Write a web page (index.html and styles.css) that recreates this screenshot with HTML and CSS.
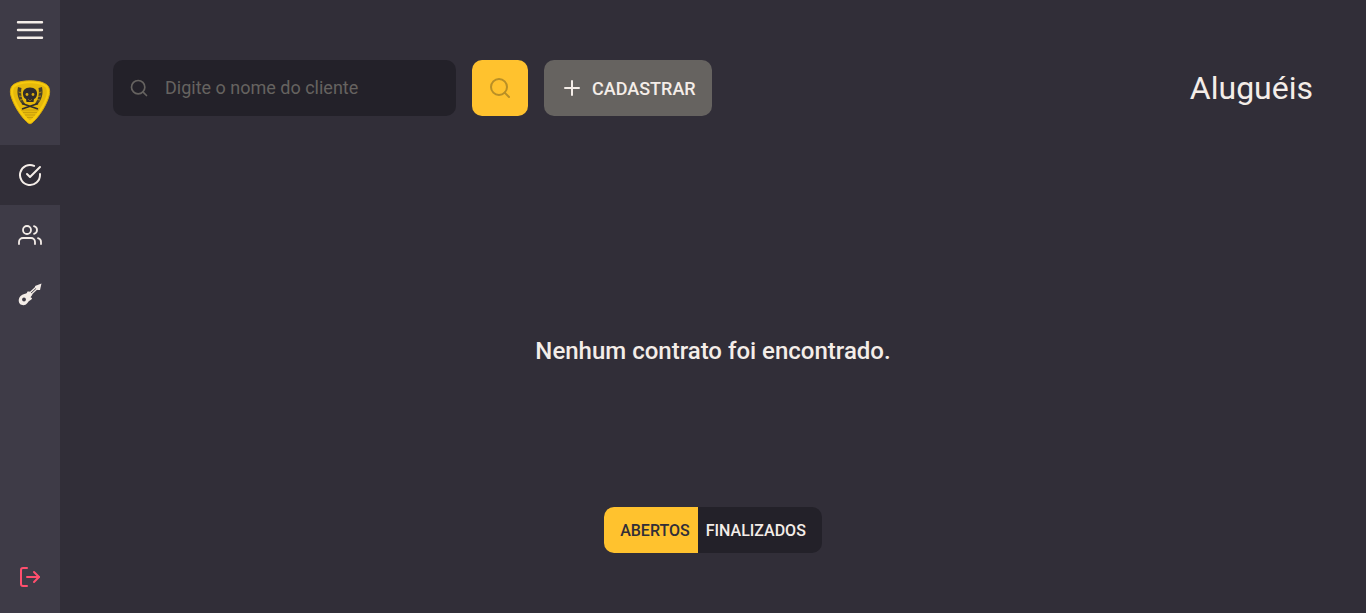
FILE: index.html
```html
<!DOCTYPE html>
<html lang="pt-BR">
<head>
<meta charset="utf-8">
<title>Aluguéis</title>
<link rel="stylesheet" href="styles.css">
</head>
<body>
<div class="app">
  <aside class="sidebar">
    <button class="nav-item" aria-label="Menu">
      <svg class="menu-icon" width="28" height="20" viewBox="0 0 28 20" fill="none" stroke="#f4ede8" stroke-width="2.4" stroke-linecap="round"><path d="M2 2.200h24M2 10h24M2 17.800h24"/></svg>
    </button>
    <div class="logo">
      <svg width="42" height="46" viewBox="0 0 42 46" fill="none">
        <path d="M21 1.800C28 1.800 35 3.200 38.500 6.500C41.500 9.800 41 15 39 20C35.500 30 27.500 40.500 22.800 44C21.600 44.900 20.400 44.900 19.200 44C14.500 40.500 6.500 30 3 20C1 15 .5 9.800 3.500 6.500C7 3.200 14 1.800 21 1.800Z" fill="#f7cb0e" stroke="#d9ab0a" stroke-width="1"/>
        <path d="M21 4.300C27 4.300 33.200 5.500 36.300 8.300C38.500 10.800 38 15 36.500 19C33 28 26 37.500 21 41.500C16 37.500 9 28 5.500 19C4 15 3.500 10.800 5.700 8.300C8.800 5.500 15 4.300 21 4.300Z" fill="#e6b90b"/>
        <path d="M12 31h18M14 33.500h14M16 36h10M18 38.500h6" stroke="#c99f0a" stroke-width="1"/>
        <path d="M9 8C7.500 14.500 9 21 14 26L16 24.500C12.500 20.500 11.500 14 12.500 9ZM33 8C34.500 14.500 33 21 28 26L26 24.500C29.500 20.500 30.500 14 29.500 9Z" fill="#4b432a"/>
        <path d="M9.500 13l3 1M10 17l3 .5M11 21l3-.5M32.500 13l-3 1M32 17l-3 .5M31 21l-3-.5" stroke="#c99f0a" stroke-width=".8"/>
        <path d="M21 8.500C16 8.500 13.500 11.500 14 15.500C14.300 18 15.500 19.500 17 20L17.500 23H24.500L25 20C26.500 19.500 27.700 18 28 15.500C28.500 11.500 26 8.500 21 8.500Z" fill="#2f2c2c"/>
        <path d="M13 24.500L29 30M29 24.500L13 30" stroke="#2f2c2c" stroke-width="1.800"/>
        <circle cx="18" cy="15.500" r="1.400" fill="#d7a90c"/><circle cx="24" cy="15.500" r="1.400" fill="#d7a90c"/>
        <path d="M19.500 20.500l1 1M22.500 20.500l-1 1" stroke="#d7a90c" stroke-width=".8"/>
      </svg>
    </div>
    <a class="nav-item active" href="#" aria-label="Aluguéis">
      <svg width="24" height="24" viewBox="0 0 24 24" fill="none" stroke="#f4ede8" stroke-width="2" stroke-linecap="round" stroke-linejoin="round"><path d="M22 11.080V12a10 10 0 1 1-5.930-9.140"/><path d="M22 4L12 14.010l-3-3"/></svg>
    </a>
    <a class="nav-item" href="#" aria-label="Clientes">
      <svg width="24" height="24" viewBox="0 0 24 24" fill="none" stroke="#f4ede8" stroke-width="1.800" stroke-linecap="round" stroke-linejoin="round"><path d="M17 21v-2a4 4 0 0 0-4-4H5a4 4 0 0 0-4 4v2"/><circle cx="9" cy="7" r="4"/><path d="M23 21v-2a4 4 0 0 0-3-3.870"/><path d="M16 3.130a4 4 0 0 1 0 7.750"/></svg>
    </a>
    <a class="nav-item" href="#" aria-label="Instrumentos">
      <svg width="24" height="24" viewBox="0 0 24 24" fill="none"><path d="M10.500 12.500L19.500 4" stroke="#f4ede8" stroke-width="3.200"/><path d="M11 12L19 4.500" stroke="#3e3b47" stroke-width="1"/><path d="M17 3L23.500 .5L22 7L19.500 7L17.500 5Z" fill="#f4ede8"/><path d="M9.500 8.500C9 9.800 8.800 10.300 8 10.500C6 10.800 2.500 12 1.300 14.800C.3 17 .6 19.500 1.800 20.800C3.200 22.300 5.800 22.600 7.500 21.800C9 21 9.500 19.700 10.500 18.500C11.500 17.300 14 16.800 14 15.500C14 14.800 13 14.800 12.500 14.300L14.500 11.500L11.500 8.500Z" fill="#f4ede8"/><circle cx="6" cy="16.500" r="1.900" fill="#3e3b47"/></svg>
    </a>
    <a class="nav-item logout" href="#" aria-label="Sair">
      <svg width="24" height="24" viewBox="0 0 24 24" fill="none" stroke="#ff4f6e" stroke-width="2" stroke-linecap="round" stroke-linejoin="round"><path d="M9 21H5a2 2 0 0 1-2-2V5a2 2 0 0 1 2-2h4"/><path d="M16 17l5-5-5-5"/><path d="M21 12H9"/></svg>
    </a>
  </aside>
  <main class="main">
    <header class="toolbar">
      <label class="search">
        <svg width="20" height="20" viewBox="0 0 24 24" fill="none" stroke="#666360" stroke-width="2" stroke-linecap="round" stroke-linejoin="round"><circle cx="11" cy="11" r="8"/><path d="M21 21l-4.350-4.350"/></svg>
        <input class="search-input" type="text" placeholder="Digite o nome do cliente">
      </label>
      <button class="btn-search" aria-label="Buscar">
        <svg width="24" height="24" viewBox="0 0 24 24" fill="none" stroke="#b98f26" stroke-width="2" stroke-linecap="round" stroke-linejoin="round"><circle cx="11" cy="11" r="8"/><path d="M21 21l-4.350-4.350"/></svg>
      </button>
      <button class="btn-add">
        <svg width="24" height="24" viewBox="0 0 24 24" fill="none" stroke="#f4ede8" stroke-width="2" stroke-linecap="round" stroke-linejoin="round"><path d="M12 5v14M5 12h14"/></svg>
        <span>CADASTRAR</span>
      </button>
      <h1 class="title">Aluguéis</h1>
    </header>
    <section class="empty">
      <p class="empty-text">Nenhum contrato foi encontrado.</p>
    </section>
    <nav class="tabs">
      <button class="tab tab-open">ABERTOS</button>
      <button class="tab tab-done">FINALIZADOS</button>
    </nav>
  </main>
</div>
</body>
</html>
```
FILE: styles.css
```css
* { box-sizing: border-box; margin: 0; padding: 0; }
html, body { height: 100%; overflow: hidden; }
body { background: #312e38; color: #f4ede8; font-family: Roboto, "Liberation Sans", sans-serif; }
button { border: 0; font-family: inherit; cursor: pointer; }
.app { display: flex; height: 613px; }

.sidebar { width: 60px; flex: none; background: #3e3b47; display: flex; flex-direction: column; }
.nav-item { width: 60px; height: 60px; flex: none; display: flex; align-items: center; justify-content: center; background: transparent; }
.nav-item.active { background: #312e38; }
.logo { height: 85px; flex: none; display: flex; align-items: flex-start; justify-content: center; padding-top: 19px; }
.logout { margin-top: auto; margin-bottom: 6px; }

.main { flex: 1; display: flex; flex-direction: column; padding: 60px 53px; }
.toolbar { display: flex; align-items: center; gap: 16px; height: 56px; flex: none; }
.search { width: 343px; height: 56px; background: #232129; border-radius: 10px; display: flex; align-items: center; gap: 16px; padding: 0 16px; }
.search svg { flex: none; }
.search-input { flex: 1; min-width: 0; height: 54px; margin-bottom: 2px; background: transparent; border: 0; outline: 0; color: #f4ede8; font: 400 18px Roboto, sans-serif; }
.search-input::placeholder { color: #666360; opacity: 1; }
.btn-search { width: 56px; height: 56px; background: #ffc22e; border-radius: 10px; display: flex; align-items: center; justify-content: center; }
.btn-add { width: 168px; height: 56px; background: #666360; border-radius: 10px; color: #f4ede8; display: flex; align-items: center; gap: 8px; padding: 0 16px; font-size: 18px; font-weight: 500; }
.title { margin-left: auto; font-size: 32px; font-weight: 400; line-height: 56px; color: #f4ede8; }

.empty { flex: 1; display: flex; align-items: center; justify-content: center; padding-top: 78px; }
.empty-text { font-size: 24px; font-weight: 500; }

.tabs { display: flex; justify-content: center; flex: none; }
.tab { height: 46px; font-size: 16px; font-weight: 500; }
.tab-open { background: #ffc22e; color: #312e38; border-radius: 10px 0 0 10px; padding: 0 8px 0 16px; }
.tab-done { background: #232129; color: #f4ede8; border-radius: 0 10px 10px 0; padding: 0 16px 0 8px; }
```
